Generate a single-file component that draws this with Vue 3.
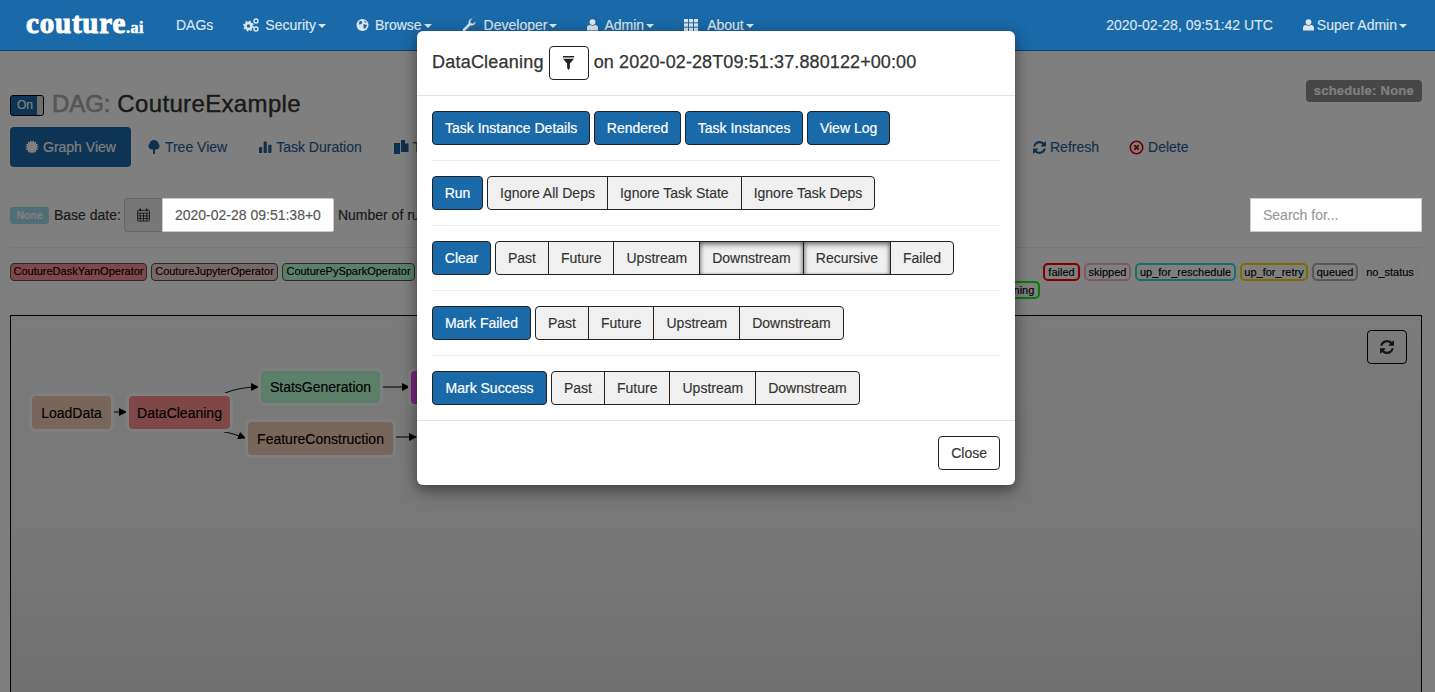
<script setup>
const REFRESH = 'M1511 928q0 5-1 7-64 268-268 434.5t-478 166.5q-146 0-282.5-55t-243.5-157l-129 129q-19 19-45 19t-45-19-19-45v-448q0-26 19-45t45-19h448q26 0 45 19t19 45-19 45l-137 137q71 66 161 102t187 36q134 0 250-65t186-179q11-17 53-117 8-23 30-23h192q13 0 22.5 9.5t9.5 22.5zm25-800v448q0 26-19 45t-45 19h-448q-26 0-45-19t-19-45 19-45l138-138q-148-137-349-137-134 0-250 65t-186 179q-11 17-53 117-8 23-30 23h-199q-13 0-22.5-9.5t-9.5-22.5v-7q65-268 270-434.5t480-166.5q146 0 284 55.5t245 156.5l130-129q19-19 45-19t45 19 19 45z'

// burst used by the Graph View pill
const burst = Array.from({ length: 28 }, (_, i) => {
  const r = i % 2 ? 5 : 7
  const a = (i * Math.PI) / 14
  return `${(7 + r * Math.cos(a)).toFixed(2)},${(7 + r * Math.sin(a)).toFixed(2)}`
}).join(' ')

const operators = [
  { name: 'CoutureDaskYarnOperator', bg: '#ff9090', w: 137 },
  { name: 'CoutureJupyterOperator', bg: '#f0cfcf', w: 127 },
  { name: 'CouturePySparkOperator', bg: '#b8ffd2', w: 133 }
]

const states = [
  { name: 'failed', color: '#ff0000', w: 37 },
  { name: 'skipped', color: '#ffb6c1', w: 47 },
  { name: 'up_for_reschedule', color: '#2fe0d0', w: 101 },
  { name: 'up_for_retry', color: '#ffd700', w: 68 },
  { name: 'queued', color: '#b0b0b0', w: 46 },
  { name: 'no_status', color: '#fafafa', w: 56 }
]

const actions = [
  { label: 'Run', w: 51, opts: ['Ignore All Deps', 'Ignore Task State', 'Ignore Task Deps'] },
  { label: 'Clear', w: 59, opts: ['Past', 'Future', 'Upstream', 'Downstream', 'Recursive', 'Failed'], on: ['Downstream', 'Recursive'] },
  { label: 'Mark Failed', w: 99, opts: ['Past', 'Future', 'Upstream', 'Downstream'] },
  { label: 'Mark Success', w: 115, opts: ['Past', 'Future', 'Upstream', 'Downstream'] }
]

const nodes = [
  { name: 'LoadData', cls: 'peach', left: 18, top: 77, width: 85 },
  { name: 'DataCleaning', cls: 'red', left: 115, top: 77, width: 107 },
  { name: 'StatsGeneration', cls: 'green short', left: 247, top: 52, width: 125 },
  { name: 'FeatureConstruction', cls: 'peach', left: 234, top: 103, width: 151 },
  { name: '', cls: 'purple', left: 397, top: 52, width: 120 }
]
</script>

<template>
  <div class="page">
    <nav class="navbar">
      <div class="logo">couture<span>.ai</span></div>
      <a class="nav-link">DAGs</a>
      <a class="nav-link">
        <svg class="ico" viewBox="0 0 16 14" width="16" height="14"><circle cx="5.5" cy="8" r="3" fill="none" stroke="currentColor" stroke-width="2.6" /><circle cx="5.5" cy="8" r="4.6" fill="none" stroke="currentColor" stroke-width="1.6" stroke-dasharray="1.8 1.8" /><circle cx="13" cy="3" r="2" fill="none" stroke="currentColor" stroke-width="1.4" /><circle cx="13" cy="11" r="2" fill="none" stroke="currentColor" stroke-width="1.4" /></svg>
        Security<i class="caret"></i>
      </a>
      <a class="nav-link">
        <svg class="ico" viewBox="0 0 14 14" width="13" height="14"><circle cx="7" cy="7" r="6.5" fill="currentColor" /><path d="M4 2.5l3 1-1 2.5-3 .5zM8 6l4 1-2 4-2-1zM9 2l2.500 2-2 .5z" fill="#1a69a8" /></svg>
        Browse<i class="caret"></i>
      </a>
      <a class="nav-link wide">
        <svg class="ico" viewBox="0 0 14 14" width="14" height="14"><path d="M13.600 3.400a3.900 3.900 0 0 1-5.100 3.900L3 13a1.400 1.400 0 0 1-2-2l5.700-5.500A3.900 3.900 0 0 1 10.600.4L8.200 2.800l.5 2.500 2.500.5 2.400-2.400z" fill="currentColor" /></svg>
        Developer<i class="caret"></i>
      </a>
      <a class="nav-link">
        <svg class="ico" viewBox="0 0 12 14" width="11" height="14"><circle cx="6" cy="3.800" r="3.200" fill="currentColor" /><path d="M0 13v-3c0-2 1.500-3 3-3 1.800 1.200 4.200 1.200 6 0 1.500 0 3 1 3 3v3z" fill="currentColor" /></svg>
        Admin<i class="caret"></i>
      </a>
      <a class="nav-link wide about">
        <svg class="ico" viewBox="0 0 14 12" width="14" height="12" fill="currentColor"><rect width="4" height="3.300" /><rect x="5" width="4" height="3.300" /><rect x="10" width="4" height="3.300" /><rect y="4.350" width="4" height="3.300" /><rect x="5" y="4.350" width="4" height="3.300" /><rect x="10" y="4.350" width="4" height="3.300" /><rect y="8.700" width="4" height="3.300" /><rect x="5" y="8.700" width="4" height="3.300" /><rect x="10" y="8.700" width="4" height="3.300" /></svg>
        About<i class="caret"></i>
      </a>
      <div class="nav-right">
        <a class="nav-link">2020-02-28, 09:51:42 UTC</a>
        <a class="nav-link">
          <svg class="ico user" viewBox="0 0 12 14" width="11" height="14"><circle cx="6" cy="3.800" r="3.200" fill="currentColor" /><path d="M0 13v-3c0-2 1.500-3 3-3 1.800 1.200 4.200 1.200 6 0 1.500 0 3 1 3 3v3z" fill="currentColor" /></svg>
          Super Admin<i class="caret"></i>
        </a>
      </div>
    </nav>

    <main class="content">
      <div class="title-row">
        <div class="title">
          <div class="toggle"><span>On</span><i></i></div>
          <h4><span class="muted">DAG:</span> CoutureExample</h4>
        </div>
        <span class="schedule">schedule: None</span>
      </div>

      <div class="tabs">
        <div class="tabs-left">
          <a class="pill active">
            <svg class="ico" viewBox="0 0 14 14" width="14" height="14"><polygon :points="burst" fill="currentColor" /></svg>
            Graph View
          </a>
          <a class="pill tree">
            <svg class="ico" viewBox="0 0 12 14" width="12" height="14"><path d="M6 0a4.500 4.500 0 0 1 4.400 3.600A3.400 3.400 0 0 1 8 9.500H7V14H5V9.500H4A3.400 3.400 0 0 1 1.600 3.600 4.500 4.500 0 0 1 6 0z" fill="currentColor" /></svg>
            Tree View
          </a>
          <a class="pill">
            <svg class="ico" viewBox="0 0 14 14" width="13" height="14" fill="currentColor"><rect y="7" width="3.400" height="6.500" rx=".5" /><rect x="5" y="1" width="3.400" height="12.500" rx=".5" /><rect x="10" y="4.500" width="3.400" height="9" rx=".5" /></svg>
            Task Duration
          </a>
          <a class="pill">
            <svg class="ico" viewBox="0 0 15 14" width="15" height="14" fill="currentColor"><path d="M0 3h6v11H0zM7 0h4v3.500h3.500V12H7z" /></svg>
            Task Tries
          </a>
        </div>
        <a class="pill">
          <svg class="ico" viewBox="0 0 1536 1536" width="13" height="13" fill="currentColor"><path :d="REFRESH" /></svg>
          Refresh
        </a>
        <a class="pill">
          <svg class="ico" viewBox="0 0 14 14" width="15" height="15"><circle cx="7" cy="7" r="5.800" fill="none" stroke="#d40000" stroke-width="1.500" /><path d="M4.900 4.900l4.200 4.200M9.100 4.900l-4.200 4.200" stroke="#d40000" stroke-width="1.700" /></svg>
          Delete
        </a>
      </div>

      <div class="filters">
        <span class="none-label">None</span>
        <span class="base-label">Base date:</span>
        <span class="addon">
          <svg viewBox="0 0 14 14" width="13" height="14" fill="none" stroke="#333" stroke-width="1"><rect x=".5" y="2" width="13" height="11.500" rx="1" /><path d="M.5 5h13M.5 8h13M.5 10.800h13M3.500 5v8.500M7 5v8.500M10.500 5v8.500" /><path d="M3.500 0v3M10.500 0v3" stroke-width="1.600" /></svg>
        </span>
        <input class="field date" value="2020-02-28 09:51:38+00:00" readonly />
        <span class="base-label runs">Number of runs:</span>
        <input class="field search" placeholder="Search for..." />
      </div>

      <hr class="rule" />

      <div class="legends">
        <div class="operators">
          <span v-for="op in operators" :key="op.name" class="op" :style="{ background: op.bg, width: op.w + 'px' }">{{ op.name }}</span>
        </div>
        <div class="states">
          <div class="state-row">
            <span v-for="s in states" :key="s.name" class="state" :style="{ borderColor: s.color, width: s.w + 'px' }">{{ s.name }}</span>
          </div>
          <div class="state-row second">
            <span class="state running">running</span>
          </div>
        </div>
      </div>

      <section class="graph">
        <button class="refresh-btn">
          <svg viewBox="0 0 1536 1536" width="14" height="14" fill="#2a2a2a"><path :d="REFRESH" /></svg>
        </button>
        <svg class="edges" width="500" height="200" fill="none" stroke="#222" stroke-width="1.200">
          <defs>
            <marker id="tip" viewBox="0 0 8 8" refX="7" refY="4" markerWidth="8" markerHeight="8" markerUnits="userSpaceOnUse" orient="auto"><path d="M0 0L8 4L0 8z" fill="#000" stroke="none" /></marker>
          </defs>
          <path d="M103 96H115" marker-end="url(#tip)" />
          <path d="M214 77C224 73 232 71 247 71" marker-end="url(#tip)" />
          <path d="M213 116C220 117 226 119 234 122" marker-end="url(#tip)" />
          <path d="M372 71H398" marker-end="url(#tip)" />
          <path d="M385 121H405" marker-end="url(#tip)" />
        </svg>
        <div v-for="n in nodes" :key="n.left" class="node" :class="n.cls" :style="{ left: n.left + 'px', top: n.top + 'px', width: n.width + 'px' }">{{ n.name }}</div>
      </section>
    </main>

    <div class="backdrop"></div>

    <div class="modal">
      <header class="modal-head">
        <span class="head-text">DataCleaning</span>
        <button class="btn plain filter-btn">
          <svg viewBox="0 0 14 15" width="13" height="14"><path d="M1 0h12v1.500H1zM1 3h12L8.500 8v5L7 15l-1.500-2V8z" fill="#222" /></svg>
        </button>
        <span class="head-text on">on 2020-02-28T09:51:37.880122+00:00</span>
      </header>
      <div class="modal-body">
        <div class="action-row links">
          <button class="btn primary">Task Instance Details</button>
          <button class="btn primary">Rendered</button>
          <button class="btn primary">Task Instances</button>
          <button class="btn primary">View Log</button>
        </div>
        <template v-for="a in actions" :key="a.label">
          <hr class="sep" />
          <div class="action-row">
            <button class="btn primary" :style="{ width: a.w + 'px' }">{{ a.label }}</button>
            <div class="group">
              <button v-for="o in a.opts" :key="o" class="btn opt" :class="{ pressed: a.on && a.on.includes(o) }">{{ o }}</button>
            </div>
          </div>
        </template>
      </div>
      <footer class="modal-foot">
        <button class="btn plain">Close</button>
      </footer>
    </div>
  </div>
</template>

<style>
html,
body {
  margin: 0;
  overflow: hidden;
  background: #fff;
}
</style>

<style scoped>
.page {
  position: relative;
  height: 692px;
  overflow: hidden;
  font-family: "Liberation Sans", Arial, sans-serif;
  font-size: 14px;
  color: #333;
  -webkit-text-stroke: 0.15px;
}

.navbar {
  position: relative;
  z-index: 20;
  display: flex;
  align-items: center;
  box-sizing: border-box;
  height: 51px;
  padding: 0 13px 0 26px;
  background: #1a69a8;
  border-bottom: 1px solid #0d3f6e;
}

.logo {
  width: 120px;
  margin-right: 15px;
  margin-top: -3px;
  font-family: "Liberation Serif", serif;
  font-size: 29px;
  font-weight: 700;
  letter-spacing: 0.8px;
  white-space: nowrap;
  color: #fff;
  -webkit-text-stroke: 1px #fff;
}

.logo span {
  font-size: 16px;
  letter-spacing: 0.5px;
  -webkit-text-stroke: 0.5px #fff;
}

.nav-link {
  display: flex;
  align-items: center;
  padding: 0 15px;
  color: #dce6ee;
  white-space: nowrap;
}

.nav-link .ico {
  margin-right: 6px;
}

.nav-link.wide .ico {
  margin-right: 8px;
}

.nav-link.about .ico {
  margin-right: 9px;
}

.nav-link .ico.user {
  margin-right: 3px;
}

.nav-right {
  display: flex;
  margin-left: auto;
}

.caret {
  width: 0;
  height: 0;
  margin-left: 2px;
  margin-top: 2px;
  border-top: 4px solid currentColor;
  border-left: 4px solid transparent;
  border-right: 4px solid transparent;
}

.content {
  padding: 0 13px 0 10px;
}

.title-row {
  display: flex;
  justify-content: space-between;
  height: 47px;
  margin-top: 29px;
}

.title {
  display: flex;
  gap: 8px;
  padding-top: 15px;
}

.toggle {
  position: relative;
  box-sizing: border-box;
  width: 34px;
  height: 21px;
  background: #1a69a8;
  border: 1px solid #000;
  border-radius: 3px;
  color: #fff;
  font-size: 12px;
  line-height: 19px;
  padding-left: 6px;
}

.toggle i {
  position: absolute;
  right: 0;
  top: 0;
  bottom: 0;
  width: 6px;
  background: #ddd;
  border-radius: 0 2px 2px 0;
}

h4 {
  margin: -4px 0 0;
  font-size: 24px;
  line-height: 26px;
  font-weight: 400;
  letter-spacing: 0.35px;
  color: #333;
  -webkit-text-stroke: 0.4px #333;
}

.muted {
  color: #aaa;
  letter-spacing: -0.1px;
  -webkit-text-stroke: 0.7px #aaa;
}

.schedule {
  box-sizing: border-box;
  height: 22px;
  padding: 0 8px;
  border-radius: 4px;
  background: #8c8c8c;
  color: #fff;
  font-size: 13px;
  font-weight: 700;
  line-height: 22px;
  letter-spacing: 0.25px;
}

.tabs {
  display: flex;
  height: 40px;
}

.tabs-left {
  display: flex;
  gap: 2px;
  width: 1008px;
  flex-shrink: 0;
}

.pill {
  display: flex;
  align-items: center;
  padding: 0 15px;
  border-radius: 4px;
  color: #1f5f94;
  white-space: nowrap;
}

.pill .ico {
  margin-right: 4px;
}

.pill.tree .ico {
  margin-right: 5px;
}

.pill.active {
  background: #1a69a8;
  color: #fff;
}

.filters {
  position: relative;
  display: flex;
  align-items: center;
  height: 34px;
  margin-top: 31px;
}

.none-label {
  box-sizing: border-box;
  width: 39px;
  height: 17px;
  margin-right: 5px;
  border-radius: 3px;
  background: #a0dcec;
  color: #fff;
  font-size: 10.5px;
  font-weight: 700;
  line-height: 17px;
  text-align: center;
}

.base-label {
  margin-right: 3px;
}

.addon {
  display: flex;
  align-items: center;
  justify-content: center;
  box-sizing: border-box;
  width: 38px;
  height: 34px;
  background: #eee;
  border: 1px solid #ccc;
  border-right: 0;
  border-radius: 4px 0 0 4px;
}

.field {
  position: relative;
  z-index: 15;
  box-sizing: border-box;
  width: 172px;
  height: 34px;
  padding: 6px 12px;
  background: #fff;
  border: 1px solid #ccc;
  border-radius: 0 2px 2px 0;
  font: 14px "Liberation Sans", Arial, sans-serif;
  color: #555;
  outline: 0;
}

.field::placeholder {
  color: #999;
  opacity: 1;
}

.runs {
  margin-left: 4px;
}

.search {
  margin-left: auto;
  border-radius: 0;
}

.rule {
  height: 1px;
  margin: 15px 0;
  border: 0;
  background: #eee;
}

.legends {
  display: flex;
  justify-content: space-between;
  height: 52px;
}

.operators {
  display: flex;
  gap: 4px;
  align-items: flex-start;
}

.op {
  box-sizing: border-box;
  height: 18px;
  border: 1px solid #555;
  border-radius: 4px;
  font-size: 11px;
  line-height: 15px;
  color: #000;
  text-align: center;
  white-space: nowrap;
}

.states {
  display: flex;
  flex-direction: column;
}

.state-row {
  display: flex;
  justify-content: flex-end;
  gap: 4px;
  padding-right: 4px;
}

.state-row.second {
  padding-right: 382px;
}

.state {
  box-sizing: border-box;
  height: 18px;
  border: 2px solid;
  border-radius: 5px;
  background: #fff;
  font-size: 11px;
  line-height: 15px;
  color: #000;
  text-align: center;
  white-space: nowrap;
}

.state.running {
  width: 48px;
  border-color: #00ff00;
}

.graph {
  position: relative;
  box-sizing: border-box;
  width: 1412px;
  height: 420px;
  background: linear-gradient(#f6f6f6, #f0f0f0 50%, #dcdcdc);
  border: 1px solid #000;
}

.refresh-btn {
  position: absolute;
  top: 14px;
  right: 14px;
  display: flex;
  align-items: center;
  justify-content: center;
  width: 40px;
  height: 34px;
  padding: 0;
  background: transparent;
  border: 1px solid #000;
  border-radius: 4px;
}

.edges {
  position: absolute;
  left: 0;
  top: 0;
}

.node {
  position: absolute;
  box-sizing: border-box;
  height: 39px;
  border: 3px solid #fff;
  border-radius: 7px;
  color: #000;
  line-height: 34px;
  text-align: center;
  white-space: nowrap;
}

.node.short {
  height: 38px;
  line-height: 33px;
}

.peach {
  background: #f2ccb6;
}

.red {
  background: #ff8f8f;
}

.green {
  background: #b8ffd2;
}

.purple {
  background: #f048ff;
}

.backdrop {
  position: absolute;
  inset: 0;
  z-index: 10;
  background: rgba(0, 0, 0, 0.5);
}

.modal {
  position: absolute;
  left: 417px;
  top: 31px;
  z-index: 30;
  width: 598px;
  background: #fff;
  border-radius: 6px;
  box-shadow: 0 5px 15px rgba(0, 0, 0, 0.5);
}

.modal-head {
  display: flex;
  align-items: center;
  gap: 5px;
  box-sizing: border-box;
  height: 65px;
  padding: 0 15px;
  border-bottom: 1px solid #e5e5e5;
  font-size: 18px;
}

.head-text {
  margin-top: -2px;
  letter-spacing: 0.22px;
  -webkit-text-stroke: 0.25px currentColor;
}

.head-text.on {
  letter-spacing: 0.11px;
}

.modal-body {
  padding: 15px;
}

.sep {
  height: 1px;
  margin: 15px 0;
  border: 0;
  background: #eee;
}

.action-row {
  display: flex;
  gap: 4px;
}

.action-row.links {
  gap: 3.5px;
}

.group {
  display: flex;
}

.btn {
  box-sizing: border-box;
  height: 34px;
  padding: 0 12px;
  border: 1px solid #222;
  border-radius: 4px;
  font: 14px "Liberation Sans", Arial, sans-serif;
  color: #333;
  white-space: nowrap;
}

.primary {
  padding: 0;
  padding-inline: 12px;
  background: #1a69a8;
  color: #fff;
  -webkit-text-stroke: 0.2px #fff;
}

.action-row:not(.links) .primary {
  padding-inline: 0;
}

.plain {
  background: #fff;
}

.filter-btn {
  display: flex;
  align-items: center;
  justify-content: center;
  width: 40px;
  height: 34px;
  padding: 0;
}

.opt {
  background: #f0f0f0;
  border-radius: 0;
  margin-left: -1px;
}

.opt:first-child {
  margin-left: 0;
  border-radius: 4px 0 0 4px;
}

.opt:last-child {
  border-radius: 0 4px 4px 0;
}

.pressed {
  box-shadow: inset 0 3px 5px rgba(0, 0, 0, 0.45), inset 2px 0 3px rgba(0, 0, 0, 0.15), inset -2px 0 3px rgba(0, 0, 0, 0.15);
}

.modal-foot {
  display: flex;
  justify-content: flex-end;
  padding: 15px;
  border-top: 1px solid #e5e5e5;
}
</style>
